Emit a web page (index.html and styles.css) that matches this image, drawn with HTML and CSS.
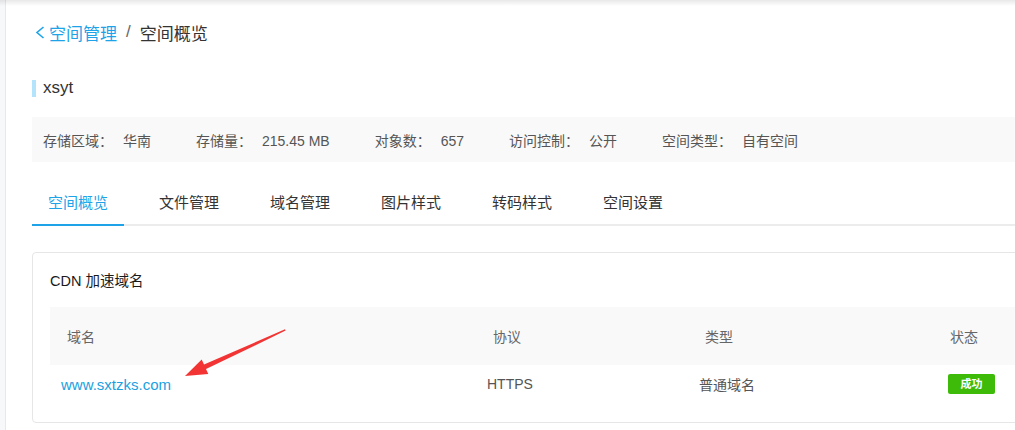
FILE: index.html
```html
<!DOCTYPE html>
<html lang="zh-CN">
<head>
    <meta charset="UTF-8">
    <meta name="viewport" content="width=device-width, initial-scale=1.0">
    <title>空间概览 - xsyt</title>
    <link rel="stylesheet" href="styles.css">
</head>
<body>
    <div class="app">
        <div class="sidebar"></div>
        <div class="main">
            <div class="breadcrumb">
                <a class="crumb-link" href="#">
                    <svg class="back-icon" width="10" height="13" viewBox="0 0 10 13">
                        <polyline points="8.5,1 2,6.5 8.5,12" fill="none" stroke="#1fa3e8" stroke-width="1.6"/>
                    </svg>空间管理</a>
                <span class="crumb-sep">/</span>
                <span class="crumb-current">空间概览</span>
            </div>

            <div class="bucket-name">xsyt</div>

            <div class="info-bar">
                <div class="info-item"><span class="info-label">存储区域：</span>华南</div>
                <div class="info-item"><span class="info-label">存储量：</span>215.45 MB</div>
                <div class="info-item"><span class="info-label">对象数：</span>657</div>
                <div class="info-item"><span class="info-label">访问控制：</span>公开</div>
                <div class="info-item"><span class="info-label">空间类型：</span>自有空间</div>
            </div>

            <div class="tabs">
                <div class="tab active">空间概览</div>
                <div class="tab">文件管理</div>
                <div class="tab">域名管理</div>
                <div class="tab">图片样式</div>
                <div class="tab">转码样式</div>
                <div class="tab">空间设置</div>
            </div>

            <div class="card">
                <div class="card-title">CDN 加速域名</div>
                <div class="domain-table">
                    <div class="row head">
                        <div class="cell">域名</div>
                        <div class="cell">协议</div>
                        <div class="cell">类型</div>
                        <div class="cell">状态</div>
                    </div>
                    <div class="row">
                        <div class="cell"><a class="domain-link" href="#">www.sxtzks.com</a></div>
                        <div class="cell">HTTPS</div>
                        <div class="cell">普通域名</div>
                        <div class="cell"><span class="badge">成功</span></div>
                    </div>
                </div>
                <!-- pointer arrow drawn over the domain row -->
                <svg class="pointer" width="110" height="55" viewBox="180 325 110 55">
                    <polygon points="185,376 201.7,359.5 204,364.5 285,329.3 285.6,330.6 206,369.1 208.3,374.1" fill="#f23434"/>
                </svg>
            </div>
        </div>
    </div>
</body>
</html>
```

FILE: styles.css
```css
body {
    margin: 0;
    overflow: hidden;
    font-family: "Liberation Sans", "Noto Sans CJK SC", sans-serif;
    color: #333;
    background: #fff;
}
a {
    text-decoration: none;
}
.app {
    position: relative;
    display: flex;
    width: 1100px;
    height: 430px;
}
/* soft shade along the top edge */
.app::before {
    content: "";
    position: absolute;
    left: 0;
    right: 0;
    top: 0;
    height: 6px;
    background: linear-gradient(to bottom, rgba(0,0,0,0.09), rgba(0,0,0,0));
}
.sidebar {
    width: 5px;
    background: #f7f8fa;
    border-right: 1px solid #e8e8e8;
}
.main {
    flex: 1;
    padding: 20px 0 0 26px;
}
.breadcrumb {
    display: flex;
    align-items: center;
    height: 24px;
    font-size: 17px;
    padding-left: 3px;
}
.crumb-link {
    display: flex;
    align-items: center;
    color: #1fa3e8;
}
.back-icon {
    margin-right: 4px;
}
.crumb-sep {
    color: #666;
    margin: 0 9px 0 9px;
}
.crumb-current {
    color: #333;
}
.bucket-name {
    display: flex;
    align-items: center;
    margin-top: 32px;
    height: 24px;
    font-size: 17px;
}
.bucket-name::before {
    content: "";
    width: 4px;
    height: 17px;
    background: #b4e4fb;
    margin-right: 7px;
}
.info-bar {
    display: flex;
    align-items: center;
    margin-top: 17px;
    height: 45px;
    padding-left: 11px;
    background: #f9f9f9;
    font-size: 14px;
    color: #555;
}
.info-item {
    margin-right: 45px;
}
.info-label {
    margin-right: 10px;
}
.tabs {
    display: flex;
    margin-top: 20px;
    border-bottom: 2px solid #ececec;
}
.tab {
    padding: 10px 16px 10px 16px;
    margin-right: 19px;
    line-height: 22px;
    font-size: 15px;
    color: #333;
    margin-bottom: -2px;
    border-bottom: 2px solid transparent;
}
.tab.active {
    color: #1fa3e8;
    border-bottom-color: #1fa3e8;
}
.card {
    position: relative;
    margin-top: 26px;
    border: 1px solid #e6e6e6;
    border-radius: 4px;
    padding: 18px 0 19px 17px;
}
.card-title {
    font-size: 14.5px;
    line-height: 20px;
    color: #1a1a1a;
}
.domain-table {
    margin-top: 16px;
    font-size: 14px;
}
.row {
    display: grid;
    grid-template-columns: 426px 212px 245px 1fr;
    align-items: center;
    height: 38px;
    color: #555;
}
.row .cell {
    padding-left: 11px;
}
.row.head {
    height: 58px;
    background: #f9f9f9;
    color: #666;
}
.row.head .cell {
    padding-left: 17px;
}
.domain-link {
    font-size: 15px;
    color: #1a9fe0;
}
.badge {
    display: inline-block;
    margin-left: 4px;
    width: 47px;
    height: 20px;
    line-height: 20px;
    text-align: center;
    font-size: 11px;
    font-weight: bold;
    color: #fff;
    background: #3dbb08;
    border-radius: 2px;
}
.pointer {
    position: absolute;
    left: 147px;
    top: 72px;
}
```
